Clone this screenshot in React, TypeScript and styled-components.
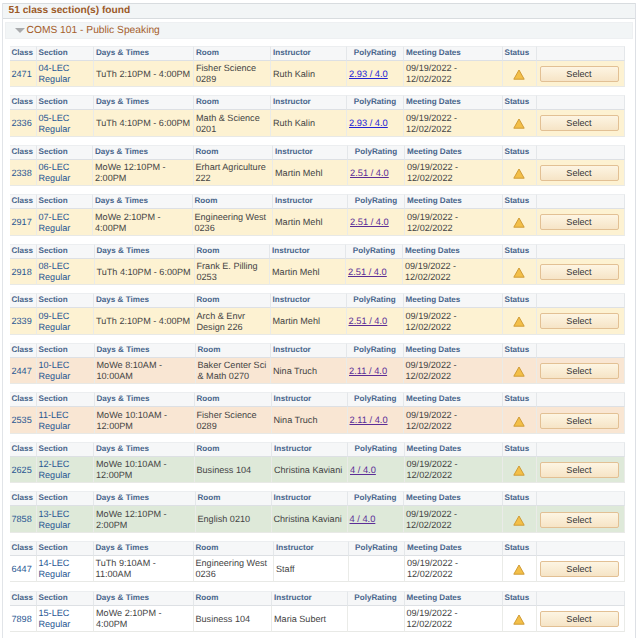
import styled, { createGlobalStyle } from "styled-components";

const GlobalStyle = createGlobalStyle`
  html, body {
    margin: 0;
    background: #fff;
    height: 638px;
    overflow: hidden;
  }
  body {
    font-family: "Liberation Sans", Arial, sans-serif;
    text-rendering: geometricPrecision;
  }
`;

const Panel = styled.div`
  box-sizing: border-box;
  width: 634px;
  height: 638px;
  margin: 3px 0 0 1.5px;
  border-left: 1.5px solid #e1e4e8;
  border-right: 1.5px solid #dde0e5;
  overflow: hidden;
`;
const Banner = styled.div`
  box-sizing: border-box;
  height: 16px;
  padding-left: 6px;
  background: #f2f5f6;
  border-top: 1px solid #d8dcdf;
  border-bottom: 1px solid #d8dcdf;
  color: #9c5a28;
  font-size: 10.2px;
  font-weight: bold;
  line-height: 14px;
`;
const GroupBar = styled.div`
  box-sizing: border-box;
  height: 17px;
  margin: 3px 2px 0 2px;
  padding-left: 9.5px;
  display: flex;
  align-items: center;
  background: #f2f5f6;
  border: 1px solid #eef0f2;
  color: #a5602c;
  font-size: 10.25px;
`;
const Caret = styled.span`
  width: 0;
  height: 0;
  border-left: 5px solid transparent;
  border-right: 5px solid transparent;
  border-top: 5px solid #a9abad;
  margin-right: 1.5px;
`;
const SectionList = styled.div`
  display: flex;
  flex-direction: column;
  gap: 8.05px;
  margin: 6.5px 0 0 7px;
  width: 615px;
`;
const SectionTable = styled.div<{ $columns: string }>`
  display: grid;
  grid-template-columns: ${(props) => props.$columns};
  grid-template-rows: 15px 26.5px;
`;
const HeadCell = styled.div<{ $center?: boolean }>`
  box-sizing: border-box;
  padding: 0 2px;
  background: #f6f7f8;
  border-top: 1px solid #eceef0;
  border-right: 1px solid #e4e7ea;
  border-bottom: 1.5px solid #dde0e4;
  color: #48658b;
  font-size: 8.1px;
  font-weight: bold;
  line-height: 12px;
  white-space: nowrap;
  text-align: ${(props) => (props.$center ? "center" : "left")};
`;
const tones = {
  yellow: "#fdf2d2",
  orange: "#f9e6d3",
  green: "#dee9d9",
  white: "#ffffff",
};
type Tone = keyof typeof tones;
const BodyCell = styled.div<{ $tone: Tone }>`
  box-sizing: border-box;
  display: flex;
  align-items: center;
  padding: 1.5px 0 0 2px;
  background: ${(props) => tones[props.$tone]};
  border-right: 1px solid #eaebe8;
  border-bottom: 1px solid #e8e9e6;
  color: #444;
  font-size: 9.1px;
  line-height: 11px;
`;
const StatusCell = styled(BodyCell)`
  justify-content: center;
  padding: 2px 0 0 0;
`;
const ActionCell = styled(BodyCell)`
  padding: 1px 0 0 2.5px;
`;
const PlainLink = styled.a`
  color: #285692;
  text-decoration: none;
`;
const RatingLink = styled.a<{ $visited: boolean }>`
  color: ${(props) => (props.$visited ? "#5b2d97" : "#2323d6")};
  font-size: 9.3px;
  text-decoration: underline;
  white-space: nowrap;
`;
const SelectButton = styled.button`
  box-sizing: border-box;
  width: 79px;
  height: 16px;
  padding: 0;
  background: linear-gradient(#fdf5e3, #f6e4c6);
  border: 1px solid #e2c094;
  border-radius: 2px;
  color: #333;
  font-family: inherit;
  font-size: 9.1px;
  line-height: 12px;
`;

function WarningIcon() {
  return (
    <svg width="12" height="11" viewBox="0 0 12 11">
      <path d="M6 1 L11.2 10.2 L0.8 10.2 Z" fill="#f3bf48" stroke="#cf9b35" strokeWidth="1" strokeLinejoin="round" />
    </svg>
  );
}

interface Section {
  id: string;
  code: string;
  days: string;
  room: string;
  instructor: string;
  rating?: string;
  visited?: boolean;
  tone: Tone;
  stops: number[];
}

const sections: Section[] = [
  { id: "2471", code: "04-LEC", days: "TuTh 2:10PM - 4:00PM", room: "Fisher Science 0289", instructor: "Ruth Kalin", rating: "2.93 / 4.0", tone: "yellow", stops: [94.5, 194.5, 271.5, 347.5, 404.5] },
  { id: "2336", code: "05-LEC", days: "TuTh 4:10PM - 6:00PM", room: "Math & Science 0201", instructor: "Ruth Kalin", rating: "2.93 / 4.0", tone: "yellow", stops: [94.5, 194.5, 271.5, 347.5, 404.5] },
  { id: "2338", code: "06-LEC", days: "MoWe 12:10PM - 2:00PM", room: "Erhart Agriculture 222", instructor: "Martin Mehl", rating: "2.51 / 4.0", visited: true, tone: "yellow", stops: [93.5, 194, 273.5, 348.5, 405.5] },
  { id: "2917", code: "07-LEC", days: "MoWe 2:10PM - 4:00PM", room: "Engineering West 0236", instructor: "Martin Mehl", rating: "2.51 / 4.0", visited: true, tone: "yellow", stops: [93.5, 193, 273.5, 348.5, 405.5] },
  { id: "2918", code: "08-LEC", days: "TuTh 4:10PM - 6:00PM", room: "Frank E. Pilling 0253", instructor: "Martin Mehl", rating: "2.51 / 4.0", visited: true, tone: "yellow", stops: [95, 195, 270.5, 346.5, 403.5] },
  { id: "2339", code: "09-LEC", days: "TuTh 2:10PM - 4:00PM", room: "Arch & Envr Design 226", instructor: "Martin Mehl", rating: "2.51 / 4.0", visited: true, tone: "yellow", stops: [94.5, 195, 271, 347, 404] },
  { id: "2447", code: "10-LEC", days: "MoWe 8:10AM - 10:00AM", room: "Baker Center Sci & Math 0270", instructor: "Nina Truch", rating: "2.11 / 4.0", visited: true, tone: "orange", stops: [95, 196, 271.5, 347.5, 404] },
  { id: "2535", code: "11-LEC", days: "MoWe 10:10AM - 12:00PM", room: "Fisher Science 0289", instructor: "Nina Truch", rating: "2.11 / 4.0", visited: true, tone: "orange", stops: [95, 195, 272, 348, 404.5] },
  { id: "2625", code: "12-LEC", days: "MoWe 10:10AM - 12:00PM", room: "Business 104", instructor: "Christina Kaviani", rating: "4 / 4.0", visited: true, tone: "green", stops: [94.5, 195, 272.5, 348.5, 405] },
  { id: "7858", code: "13-LEC", days: "MoWe 12:10PM - 2:00PM", room: "English 0210", instructor: "Christina Kaviani", rating: "4 / 4.0", visited: true, tone: "green", stops: [94.5, 196, 272, 348, 404.5] },
  { id: "6447", code: "14-LEC", days: "TuTh 9:10AM - 11:00AM", room: "Engineering West 0236", instructor: "Staff", tone: "white", stops: [94, 194, 274.5, 349, 405.5] },
  { id: "7898", code: "15-LEC", days: "MoWe 2:10PM - 4:00PM", room: "Business 104", instructor: "Maria Subert", tone: "white", stops: [94.5, 194, 272.5, 348, 405] },
];

// stops are the x positions of the middle columns, the rest never move
function columnsFor(stops: number[]) {
  const edges = [37, ...stops, 503, 537.5, 625];
  const widths = [27, ...edges.slice(1).map((edge, i) => edge - edges[i])];
  return widths.map((w) => `${w}px`).join(" ");
}

function SectionRow({ section }: { section: Section }) {
  const { tone } = section;
  return (
    <SectionTable $columns={columnsFor(section.stops)}>
      <HeadCell>Class</HeadCell>
      <HeadCell>Section</HeadCell>
      <HeadCell>Days &amp; Times</HeadCell>
      <HeadCell>Room</HeadCell>
      <HeadCell>Instructor</HeadCell>
      <HeadCell $center>PolyRating</HeadCell>
      <HeadCell>Meeting Dates</HeadCell>
      <HeadCell>Status</HeadCell>
      <HeadCell />
      <BodyCell $tone={tone}>
        <PlainLink href="#">{section.id}</PlainLink>
      </BodyCell>
      <BodyCell $tone={tone}>
        <PlainLink href="#">
          {section.code}
          <br />
          Regular
        </PlainLink>
      </BodyCell>
      <BodyCell $tone={tone}>{section.days}</BodyCell>
      <BodyCell $tone={tone}>{section.room}</BodyCell>
      <BodyCell $tone={tone}>{section.instructor}</BodyCell>
      <BodyCell $tone={tone}>
        {section.rating && (
          <RatingLink href="#" $visited={!!section.visited}>
            {section.rating}
          </RatingLink>
        )}
      </BodyCell>
      <BodyCell $tone={tone}>09/19/2022 - 12/02/2022</BodyCell>
      <StatusCell $tone={tone}>
        <WarningIcon />
      </StatusCell>
      <ActionCell $tone={tone}>
        <SelectButton>Select</SelectButton>
      </ActionCell>
    </SectionTable>
  );
}

export default function App() {
  return (
    <>
      <GlobalStyle />
      <Panel>
        <Banner>51 class section(s) found</Banner>
        <GroupBar>
          <Caret />
          COMS 101 - Public Speaking
        </GroupBar>
        <SectionList>
          {sections.map((section) => (
            <SectionRow key={section.id} section={section} />
          ))}
        </SectionList>
      </Panel>
    </>
  );
}
